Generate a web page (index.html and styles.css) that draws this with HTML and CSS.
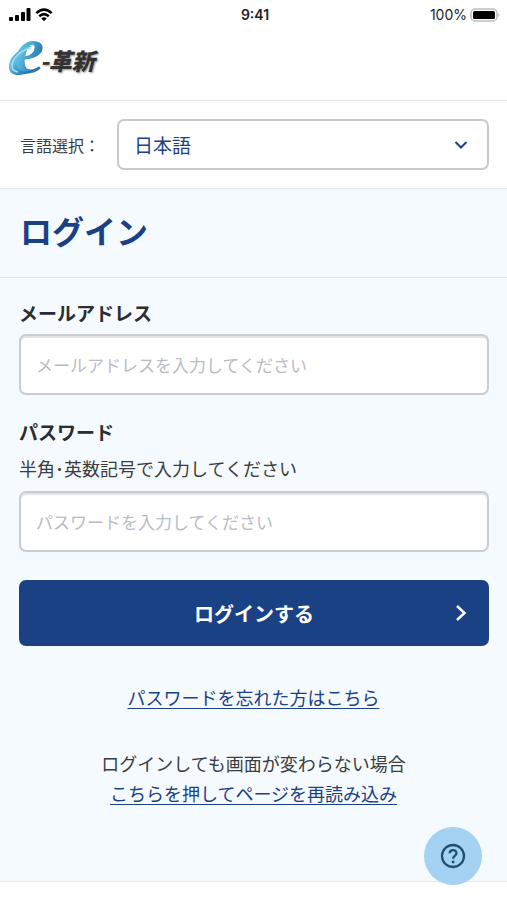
FILE: index.html
```html
<!DOCTYPE html>
<html lang="ja">
<head>
<meta charset="utf-8">
<meta name="viewport" content="width=device-width, initial-scale=1">
<title>ログイン</title>
<link rel="stylesheet" href="styles.css">
</head>
<body>
<div class="status">
  <div class="status-left">
    <svg width="22" height="14" viewBox="0 0 22 14" aria-hidden="true"><rect x="0" y="9" width="4" height="4" rx="1"/><rect x="6" y="7" width="4" height="6" rx="1"/><rect x="12" y="4" width="4" height="9" rx="1"/><rect x="17.500" y="0" width="4" height="13" rx="1"/></svg>
    <svg width="18" height="14" viewBox="0 0 18 14" aria-hidden="true"><path d="M1.300 5.200Q9-2 16.700 5.200M4.200 8.300Q9 4 13.800 8.300" fill="none" stroke="#000" stroke-width="2.500"/><path d="M6.200 10.300Q9 8.200 11.800 10.300L9 13.200Z"/></svg>
  </div>
  <span class="time">9:41</span>
  <div class="status-right">
    <span>100%</span>
    <svg width="31" height="14" viewBox="0 0 31 14" aria-hidden="true"><rect x="1" y="1" width="26" height="12" rx="4" fill="#fff" stroke="#bdbdbd" stroke-width="1.500"/><rect x="3" y="3" width="22" height="8" rx="1.500"/><path d="M28.500 5q2 2 0 4z" fill="#aaa"/></svg>
  </div>
</div>
<header class="header">
  <a class="logo" href="#" aria-label="e-革新">
    <svg class="mark" width="38" height="36" viewBox="0 0 38 36" aria-hidden="true">
      <defs><linearGradient id="blue" x1="0" y1="0" x2="1" y2="1"><stop offset="0" stop-color="#276fa5"/><stop offset=".35" stop-color="#65c4e5"/><stop offset=".6" stop-color="#3a92c4"/><stop offset="1" stop-color="#1b4e80"/></linearGradient></defs>
      <text class="mark-letter" x="6" y="31" fill="url(#blue)">e</text>
      <path d="M26 3C13 5 1 14 1 25c0 11 15 10 29 1C19 31 9 31 9 23 9 14 17 7 26 3Z" fill="url(#blue)"/>
      <path d="M23 6C13 8 4 16 4 24q0 5 6 6" fill="none" stroke="#a5dff5" stroke-width="1.500"/>
    </svg>
    <span class="logo-name">-革新</span>
  </a>
</header>
<div class="language">
  <label for="language">言語選択：</label>
  <div class="select-wrap">
    <select id="language"><option>日本語</option></select>
    <svg class="chevron-down" width="14" height="10" viewBox="0 0 14 10" aria-hidden="true"><path d="M1.500 2 7 7.500 12.500 2"/></svg>
  </div>
</div>
<main>
  <h1>ログイン</h1>
  <form>
    <div class="field">
      <label for="email">メールアドレス</label>
      <input id="email" type="email" placeholder="メールアドレスを入力してください">
    </div>
    <div class="field">
      <label for="password">パスワード</label>
      <p class="hint" id="hint">半角･英数記号で入力してください</p>
      <input id="password" type="password" aria-describedby="hint" placeholder="パスワードを入力してください">
    </div>
    <button class="submit" type="button">ログインする<svg class="chevron-right" width="12" height="18" viewBox="0 0 12 18" aria-hidden="true"><path d="M2 2 9.500 9 2 16"/></svg></button>
  </form>
  <div class="links">
    <a href="#">パスワードを忘れた方はこちら</a>
    <p>ログインしても画面が変わらない場合<br><a href="#">こちらを押してページを再読み込み</a></p>
  </div>
</main>
<button class="help" type="button" aria-label="ヘルプ">
  <svg width="26" height="26" viewBox="0 0 26 26" fill="none" stroke="#1f506f" stroke-width="2.300" aria-hidden="true"><circle cx="13" cy="13" r="11"/><path d="M9.700 10.300C9.700 6 16.500 6 16.500 10.200C16.500 12.500 13.100 12.900 13.100 15.800"/><circle cx="13.100" cy="19" r="1.400" fill="#1f506f" stroke="none"/></svg>
</button>
</body>
</html>
```
FILE: styles.css
```css
* { box-sizing: border-box; }

body {
  margin: 0;
  min-height: 100vh;
  background: #fff;
  color: #3a3d40;
  font-family: "Noto Sans CJK JP", sans-serif;
  font-size: 18px;
  line-height: 30px;
}

h1, p { margin: 0; }
a { color: #1b4185; text-underline-offset: 3px; }
button, input, select { font-family: inherit; }

.status {
  display: grid;
  grid-template-columns: 1fr auto 1fr;
  align-items: center;
  height: 26px;
  padding: 0 6px 0 9px;
  color: #222;
  font-family: Inter, sans-serif;
  font-size: 14px;
}
.status-left, .status-right { display: flex; align-items: center; gap: 4px; }
.status-right { justify-content: flex-end; gap: 3px; }
.time { font-weight: 600; }

.header {
  height: 75px;
  padding: 16px 8px;
  border-bottom: 1px solid #e4e7ee;
}
.logo {
  display: inline-flex;
  align-items: center;
  color: #333;
  text-decoration: none;
}
.mark { margin-right: -6px; overflow: visible; }
.mark-letter {
  font-family: "Liberation Serif", serif;
  font-size: 68px;
  font-style: italic;
  font-weight: 700;
}
.logo-name {
  font-size: 23px;
  font-style: italic;
  font-weight: 900;
  line-height: 36px;
  text-shadow: 1px 1px 2px #999;
}

.language {
  display: flex;
  align-items: center;
  gap: 17px;
  height: 88px;
  padding: 0 18px 0 20px;
  border-bottom: 1px solid #e0e5ed;
  font-size: 16px;
}
.language label { flex: none; }
.select-wrap { position: relative; flex: 1; }
select {
  display: block;
  width: 100%;
  height: 51px;
  padding: 0 15px;
  border: 2px solid #c5cad0;
  border-radius: 7px;
  appearance: none;
  background: #fff;
  color: #1b4185;
  font-size: 19px;
}
.chevron-down {
  position: absolute;
  top: 21px;
  right: 21px;
  fill: none;
  stroke: #1b4185;
  stroke-width: 2;
  pointer-events: none;
}

main { background: #f5fafe; border-bottom: 1px solid #e4e8f1; }
h1 {
  height: 89px;
  padding: 0 20px;
  border-bottom: 1px solid #dfe4ec;
  color: #1b4185;
  font-size: 32px;
  line-height: 82px;
}
form { padding: 20px 18px 0 19px; }
.field { margin-bottom: 22px; }
.field label {
  display: block;
  margin-bottom: 6px;
  color: #2b2e31;
  font-size: 19px;
  font-weight: 700;
}
.hint { margin-bottom: 8px; }
input {
  display: block;
  width: 100%;
  height: 61px;
  padding: 0 15px;
  border: 2px solid #c9cdd3;
  border-radius: 7px;
  background: #fff;
  box-shadow: inset 0 2px 1px #e2e4e7;
  color: #333;
  font-size: 17px;
}
input::placeholder { color: #b9bdc3; opacity: 1; }
.submit {
  position: relative;
  display: block;
  width: 100%;
  height: 66px;
  margin-top: 28px;
  border: 0;
  border-radius: 7px;
  background: #1b4185;
  color: #fff;
  font-size: 20px;
  font-weight: 700;
}
.chevron-right {
  position: absolute;
  top: 24px;
  right: 22px;
  fill: none;
  stroke: #fff;
  stroke-width: 2.5;
}
.links {
  display: grid;
  gap: 36px;
  padding: 36px 18px 73px;
  text-align: center;
}

.help {
  position: fixed;
  right: 25px;
  bottom: 15px;
  display: grid;
  place-items: center;
  width: 58px;
  height: 58px;
  padding: 0;
  border: 0;
  border-radius: 50%;
  background: #a3d2f2;
}
```
